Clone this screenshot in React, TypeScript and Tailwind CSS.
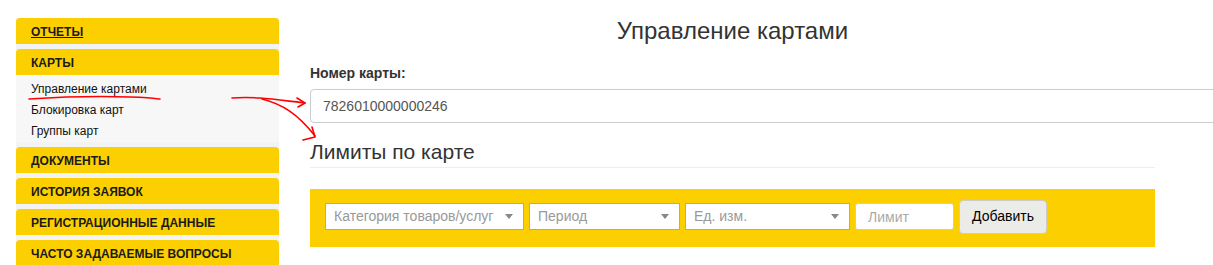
import React from 'react';

const menu = [
  { title: 'ОТЧЕТЫ', underline: true },
  { title: 'КАРТЫ', sub: ['Управление картами', 'Блокировка карт', 'Группы карт'] },
  { title: 'ДОКУМЕНТЫ' },
  { title: 'ИСТОРИЯ ЗАЯВОК' },
  { title: 'РЕГИСТРАЦИОННЫЕ ДАННЫЕ' },
  { title: 'ЧАСТО ЗАДАВАЕМЫЕ ВОПРОСЫ' },
];

function Select({ label, width }: { label: string; width: string }) {
  return (
    <div className={`${width} h-[27px] bg-white border border-[#aaa] flex items-center justify-between pl-[8px] pr-[10px]`}>
      <span className="text-[14px] text-[#999] whitespace-nowrap">{label}</span>
      <span className="w-0 h-0 border-l-[4px] border-r-[4px] border-t-[5px] border-l-transparent border-r-transparent border-t-[#888]" />
    </div>
  );
}

export default function App() {
  return (
    <div
      className="relative w-[1213px] h-[265px] overflow-hidden bg-white flex"
      style={{ fontFamily: '"Liberation Sans", Arial, sans-serif' }}
    >
      {/* Sidebar */}
      <div className="ml-[16px] mt-[18px] w-[263px] bg-[#f3f3f3] flex flex-col gap-[5px] self-start">
        {menu.map((m) => (
          <div key={m.title}>
            <div className="h-[26px] bg-[#fcd000] rounded-t-[4px] flex items-center pl-[15px] pt-[1px]">
              <span className={`text-[12px] font-bold text-[#1a1a1a] ${m.underline ? 'underline' : ''}`}>
                {m.title}
              </span>
            </div>
            {m.sub && (
              <div className="bg-[#f7f7f7] pl-[15px] pt-[4px]">
                {m.sub.map((s) => (
                  <div key={s} className="text-[12px] leading-[21px] text-[#111]">
                    {s}
                  </div>
                ))}
              </div>
            )}
          </div>
        ))}
      </div>

      {/* Main */}
      <div className="ml-[31px] w-[845px] flex flex-col">
        <h1 className="mt-[17px] text-[24px] leading-[28px] text-center text-[#333]">Управление картами</h1>
        <label className="mt-[19px] text-[14px] leading-[19px] font-bold text-[#333]">Номер карты:</label>
        <input
          readOnly
          value="7826010000000246"
          className="mt-[6px] w-[920px] h-[34px] border border-[#ccc] rounded-[4px] px-[12px] text-[14px] text-[#555] outline-none"
        />
        <div className="mt-[16px] pb-[3px] border-b border-[#eee]">
          <h3 className="text-[21px] leading-[25px] text-[#333]">Лимиты по карте</h3>
        </div>
        <div className="mt-[21px] h-[58px] bg-[#fcd000] flex items-center gap-[5px] pl-[15px] pb-[3px]">
          <Select label="Категория товаров/услуг" width="w-[199px]" />
          <Select label="Период" width="w-[151px]" />
          <Select label="Ед. изм." width="w-[165px]" />
          <input
            placeholder="Лимит"
            className="w-[99px] h-[27px] bg-white border border-[#ccc] rounded-[3px] px-[12px] text-[14px] placeholder:text-[#aaa] outline-none"
          />
          <button className="w-[88px] h-[34px] bg-[#ebebe7] border border-[#ccc] rounded-[4px] text-[14px] text-black">
            Добавить
          </button>
        </div>
      </div>

      {/* Red annotations */}
      <svg className="absolute inset-0 pointer-events-none" width="1213" height="265" fill="none" stroke="#f00" strokeWidth="1.6" strokeLinecap="round" strokeLinejoin="round">
        <path d="M29 99 C 60 97, 100 96, 130 97 S 155 99, 160 99" />
        <path d="M232 98 C 255 96, 278 100, 305 103" />
        <path d="M297 98 L305 103 L298 107" />
        <path d="M262 99 C 282 104, 298 114, 315 136" />
        <path d="M312 127 L315 137 L303 140" />
      </svg>
    </div>
  );
}
